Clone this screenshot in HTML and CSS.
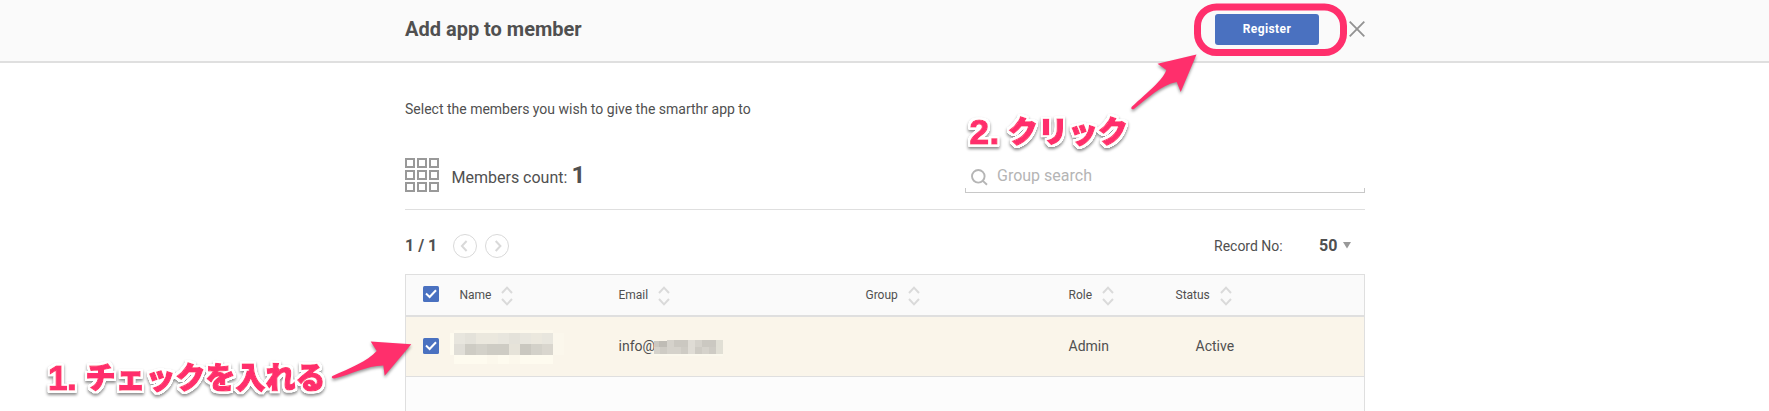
FILE: index.html
```
<!DOCTYPE html>
<html lang="en">
<head>
<meta charset="utf-8">
<title>Add app to member</title>
<link rel="stylesheet" href="styles.css">
</head>
<body>
<svg class="defs" width="0" height="0">
  <symbol id="sort" viewBox="0 0 12 20"><path d="M1 7 6 1.6 11 7M1 13l5 5.4L11 13" fill="none" stroke="#dadada" stroke-width="2"/></symbol>
  <symbol id="check" viewBox="0 0 16 16"><rect width="16" height="16" rx="1.5" fill="#4a71c0"/><path d="M3 7.6 6.6 11 13 4.2" fill="none" stroke="#fff" stroke-width="2"/></symbol>
  <filter id="outline" x="-5%" y="-10%" width="110%" height="120%">
    <feMorphology in="SourceAlpha" operator="dilate" radius="2"/>
    <feGaussianBlur stdDeviation="0.7"/>
    <feComponentTransfer result="fat"><feFuncR type="discrete" tableValues="1"/><feFuncG type="discrete" tableValues="1"/><feFuncB type="discrete" tableValues="1"/><feFuncA type="linear" slope="2.5" intercept="-0.3"/></feComponentTransfer>
    <feMerge><feMergeNode in="fat"/><feMergeNode in="SourceGraphic"/></feMerge>
  </filter>
</svg>
<header class="topbar">
  <div class="container topbar-inner">
    <h1 class="title">Add app to member</h1>
    <button class="register">Register</button>
    <svg class="close" width="16" height="16" viewBox="0 0 16 16"><path d="M.7.7 15.3 15.3M15.3.7.7 15.3" stroke="#929292" stroke-width="1.8"/></svg>
  </div>
</header>
<main class="container">
  <p class="lead">Select the members you wish to give the smarthr app to</p>
  <section class="summary">
    <svg class="grid-icon" width="34" height="34" viewBox="0 0 34 34" fill="none" stroke="#999" stroke-width="2"><path d="M1 1h8v8H1zM13 1h8v8h-8zM25 1h8v8h-8zM1 13h8v8H1zM13 13h8v8h-8zM25 13h8v8h-8zM1 25h8v8H1zM13 25h8v8h-8zM25 25h8v8h-8z"/></svg>
    <div class="count"><span class="count-label">Members count:</span><b class="count-value">1</b></div>
    <div class="search">
      <svg width="17" height="17" viewBox="0 0 17 17" fill="none" stroke="#b5b5b5" stroke-width="1.9"><circle cx="7.3" cy="7.3" r="6.3"/><path d="m11.6 11.6 4.4 4.2"/></svg>
      <span class="placeholder">Group search</span>
    </div>
  </section>
  <section class="pager">
    <b class="page">1 / 1</b>
    <svg class="nav" width="24" height="24" viewBox="0 0 24 24" fill="none" stroke="#d9d9d9"><circle cx="12" cy="12" r="11.5"/><path d="M13.6 7 8.9 12l4.7 5" stroke-width="2"/></svg>
    <svg class="nav" width="24" height="24" viewBox="0 0 24 24" fill="none" stroke="#d9d9d9"><circle cx="12" cy="12" r="11.5"/><path d="m10.7 7 4.7 5-4.7 5" stroke-width="2"/></svg>
    <span class="record">Record No:</span>
    <b class="size">50</b>
    <svg class="caret" width="9" height="7" viewBox="0 0 9 7"><path d="M0 0h8L4 6.5z" fill="#999"/></svg>
  </section>
  <section class="table">
    <div class="row head">
      <svg class="cb" width="16" height="16"><use href="#check"/></svg>
      <div class="cell"><span class="name">Name</span><svg width="12" height="20"><use href="#sort"/></svg></div>
      <div class="cell"><span class="email">Email</span><svg width="12" height="20"><use href="#sort"/></svg></div>
      <div class="cell"><span class="group">Group</span><svg width="12" height="20"><use href="#sort"/></svg></div>
      <div class="cell"><span class="role">Role</span><svg width="12" height="20"><use href="#sort"/></svg></div>
      <div class="cell"><span class="status">Status</span><svg width="12" height="20"><use href="#sort"/></svg></div>
    </div>
    <div class="row body">
      <svg class="cb" width="16" height="16"><use href="#check"/></svg>
      <div class="cell">
        <svg class="name-mask" width="115" height="34" viewBox="0 0 115 34" shape-rendering="crispEdges">
          <path fill="#fefbef" d="M0 3h4v22H0zM4 25h33v9H4zM48 25h11v9H48zM70 25h33v9H70z"/><path fill="#fcf8ec" d="M4 0h99v3H4zM37 25h11v9H37zM59 25h11v9H59z"/><path fill="#fbf7ec" d="M103 3h11v22h-11z"/>
          <path fill="#e8e6de" d="M4 3h99v11H4z"/><path fill="#ebe8de" d="M26 3h22v11H26zM81 3h11v11H81z"/><path fill="#e4e2da" d="M15 3h11v11H15zM59 3h11v11H59z"/>
          <path fill="#e0ded7" d="M4 14h11v11H4z"/><path fill="#ceccc4" d="M15 14h11v11H15zM37 14h22v11H37z"/><path fill="#d3d1c9" d="M26 14h11v11H26zM81 14h11v11H81z"/><path fill="#e6e3d9" d="M59 14h11v11H59z"/><path fill="#cac8c0" d="M70 14h11v11H70z"/><path fill="#d9d6ce" d="M92 14h11v11H92z"/>
        </svg>
      </div>
      <div class="cell"><span class="info">info@</span><svg class="mail-mask" width="77" height="18" viewBox="0 0 77 18" shape-rendering="crispEdges">
          <path fill="#fbf8ed" d="M0 16h69v2H0z"/>
          <path fill="#d5d2cb" d="M0 3h13v13H0zM13 2h56v14H13z"/><path fill="#bfbcb5" d="M5 3h8v6H5z"/><path fill="#cbc8c1" d="M0 3h5v6H0zM20 2h14v7H20zM48 2h14v7H48z"/><path fill="#cecbc4" d="M6 9h7v7H6zM27 9h7v7h-7zM41 9h7v7h-7zM55 9h7v7h-7z"/><path fill="#dfdcd5" d="M34 2h7v14h-7z"/><path fill="#e1dfd5" d="M62 2h7v14h-7z"/>
        </svg></div>
      <div class="cell"></div>
      <div class="cell"><span class="admin">Admin</span></div>
      <div class="cell"><span class="active">Active</span></div>
    </div>
  </section>
</main>
<svg class="annotations" width="1769" height="411" viewBox="0 0 1769 411">
  <g class="marks">
    <rect x="1197.5" y="7" width="146" height="45.5" rx="19" fill="none" stroke="#ff2f6c" stroke-width="7"/>
    <path d="M1196.5 54.5 1157.5 63.8 1166.3 70C1163 80 1149 91 1131.8 106.8 1130.5 108.5 1132 110 1134 109 1148 98 1161 85 1176.7 82L1180.7 92Z"/>
    <path d="M411.3 344.3 370.7 341.5 376.7 351C368 361 350 368 332.5 376 331 377 332 379 334.5 378.5 352 374 366 366 383.3 365.5L384.7 375.7Z"/>
  </g>
  <g class="labels">
    <g filter="url(#outline)"><text y="142"><tspan class="num" x="969.5" y="144">2</tspan><tspan class="num" x="989.5">.</tspan><tspan x="1008" y="142">クリック</tspan></text></g>
    <g filter="url(#outline)"><text y="389"><tspan class="num" x="48" y="390">1</tspan><tspan class="num" x="67">.</tspan><tspan x="85.5" y="387.5">チェックを入れる</tspan></text></g>
  </g>
</svg>
</body>
</html>
```
FILE: styles.css
```
* { box-sizing: border-box; }
html, body { margin: 0; height: 411px; overflow: hidden; }
body { position: relative; background: #fff; color: #505050; font-family: Roboto, "Noto Sans CJK JP", sans-serif; font-size: 14px; }
svg { flex: none; display: block; }
.defs { position: absolute; }
.container { width: 960px; margin: 0 auto; position: relative; left: .5px; }
.topbar { height: 63px; background: #fafafa; border-bottom: 2px solid #dfdfdf; }
.topbar-inner { display: flex; padding-top: 14px; }
.title { margin: 0; width: 810px; font-size: 20px; line-height: 30px; font-weight: 700; }
.register { width: 104px; height: 31px; padding: 0; border: 0; border-radius: 3px; background: #4a71c0; color: #fff; font: 700 12px/31px Roboto, sans-serif; letter-spacing: .4px; }
.close { margin: 7px 0 0 30px; }
.lead { margin: 0; padding-top: 36px; height: 95px; line-height: 20px; }
.summary { display: flex; height: 52px; border-bottom: 1px solid #dfdfdf; }
.count { width: 514px; padding: 0 0 0 12.5px; display: flex; align-items: baseline; height: 34px; line-height: 34px; font-size: 16px; }
.count-value { margin-left: 4px; font-size: 24px; }
.search { display: flex; width: 400px; height: 35px; padding: 11px 0 0 6px; margin-left: 12px; font-size: 16px; color: #b5b5b5;
  background: linear-gradient(#c8c8c8, #c8c8c8) 0 100% / 100% 1px no-repeat, linear-gradient(#c8c8c8, #c8c8c8) 0 100% / 1px 5px no-repeat, linear-gradient(#c8c8c8, #c8c8c8) 100% 100% / 1px 5px no-repeat; }
.placeholder { margin: -3px 0 0 9px; line-height: 20px; }
.pager { display: flex; height: 64px; padding-top: 24px; line-height: 24px; }
.page { width: 48px; font-size: 16px; }
.nav { margin-right: 8px; }
.record { margin-left: 697px; width: 105px; }
.size { width: 24px; font-size: 16px; }
.caret { margin-top: 8px; }
.table { border: 1px solid #dfdfdf; border-bottom: 0; background: #fcfcfc; height: 137px; }
.row { display: grid; grid-template-columns: 53.5px 159px 247px 203px 107px 1fr; }
.head { height: 42px; background: #fafafa; border-bottom: 2px solid #dfdfdf; font-size: 12px; padding-top: 11px; }
.head .cb { margin-left: 17px; }
.cell { display: flex; line-height: 20px; }
.head span { line-height: 18px; }
.head .name { width: 41.5px; }
.head .email { width: 39.5px; }
.head .group { width: 42.5px; }
.head .role { width: 33.5px; }
.head .status { width: 44.5px; }
.body { height: 60px; background: #faf5ea; border-bottom: 1px solid #dfdfdf; padding-top: 19px; }
.body .cb { margin: 2px 0 0 17px; }
.name-mask { margin: -6px 0 -8px -9.5px; }
.info { width: 35.5px; }
.mail-mask { margin-top: 2px; }
.active { margin-left: 20px; }
.annotations { position: absolute; left: 0; top: 0; pointer-events: none; }
.marks path { fill: #ff2f6c; filter: drop-shadow(0 2px 1.5px rgba(0,0,0,.4)); }
.labels { font: 900 30px "Noto Sans CJK JP", sans-serif; filter: drop-shadow(0 2px 1.5px rgba(0,0,0,.45)); }
.labels text { fill: #ff2f6c; stroke: #ff2f6c; stroke-width: 1.2px; }
.num { font: 700 35px "Liberation Sans", sans-serif; }
```
